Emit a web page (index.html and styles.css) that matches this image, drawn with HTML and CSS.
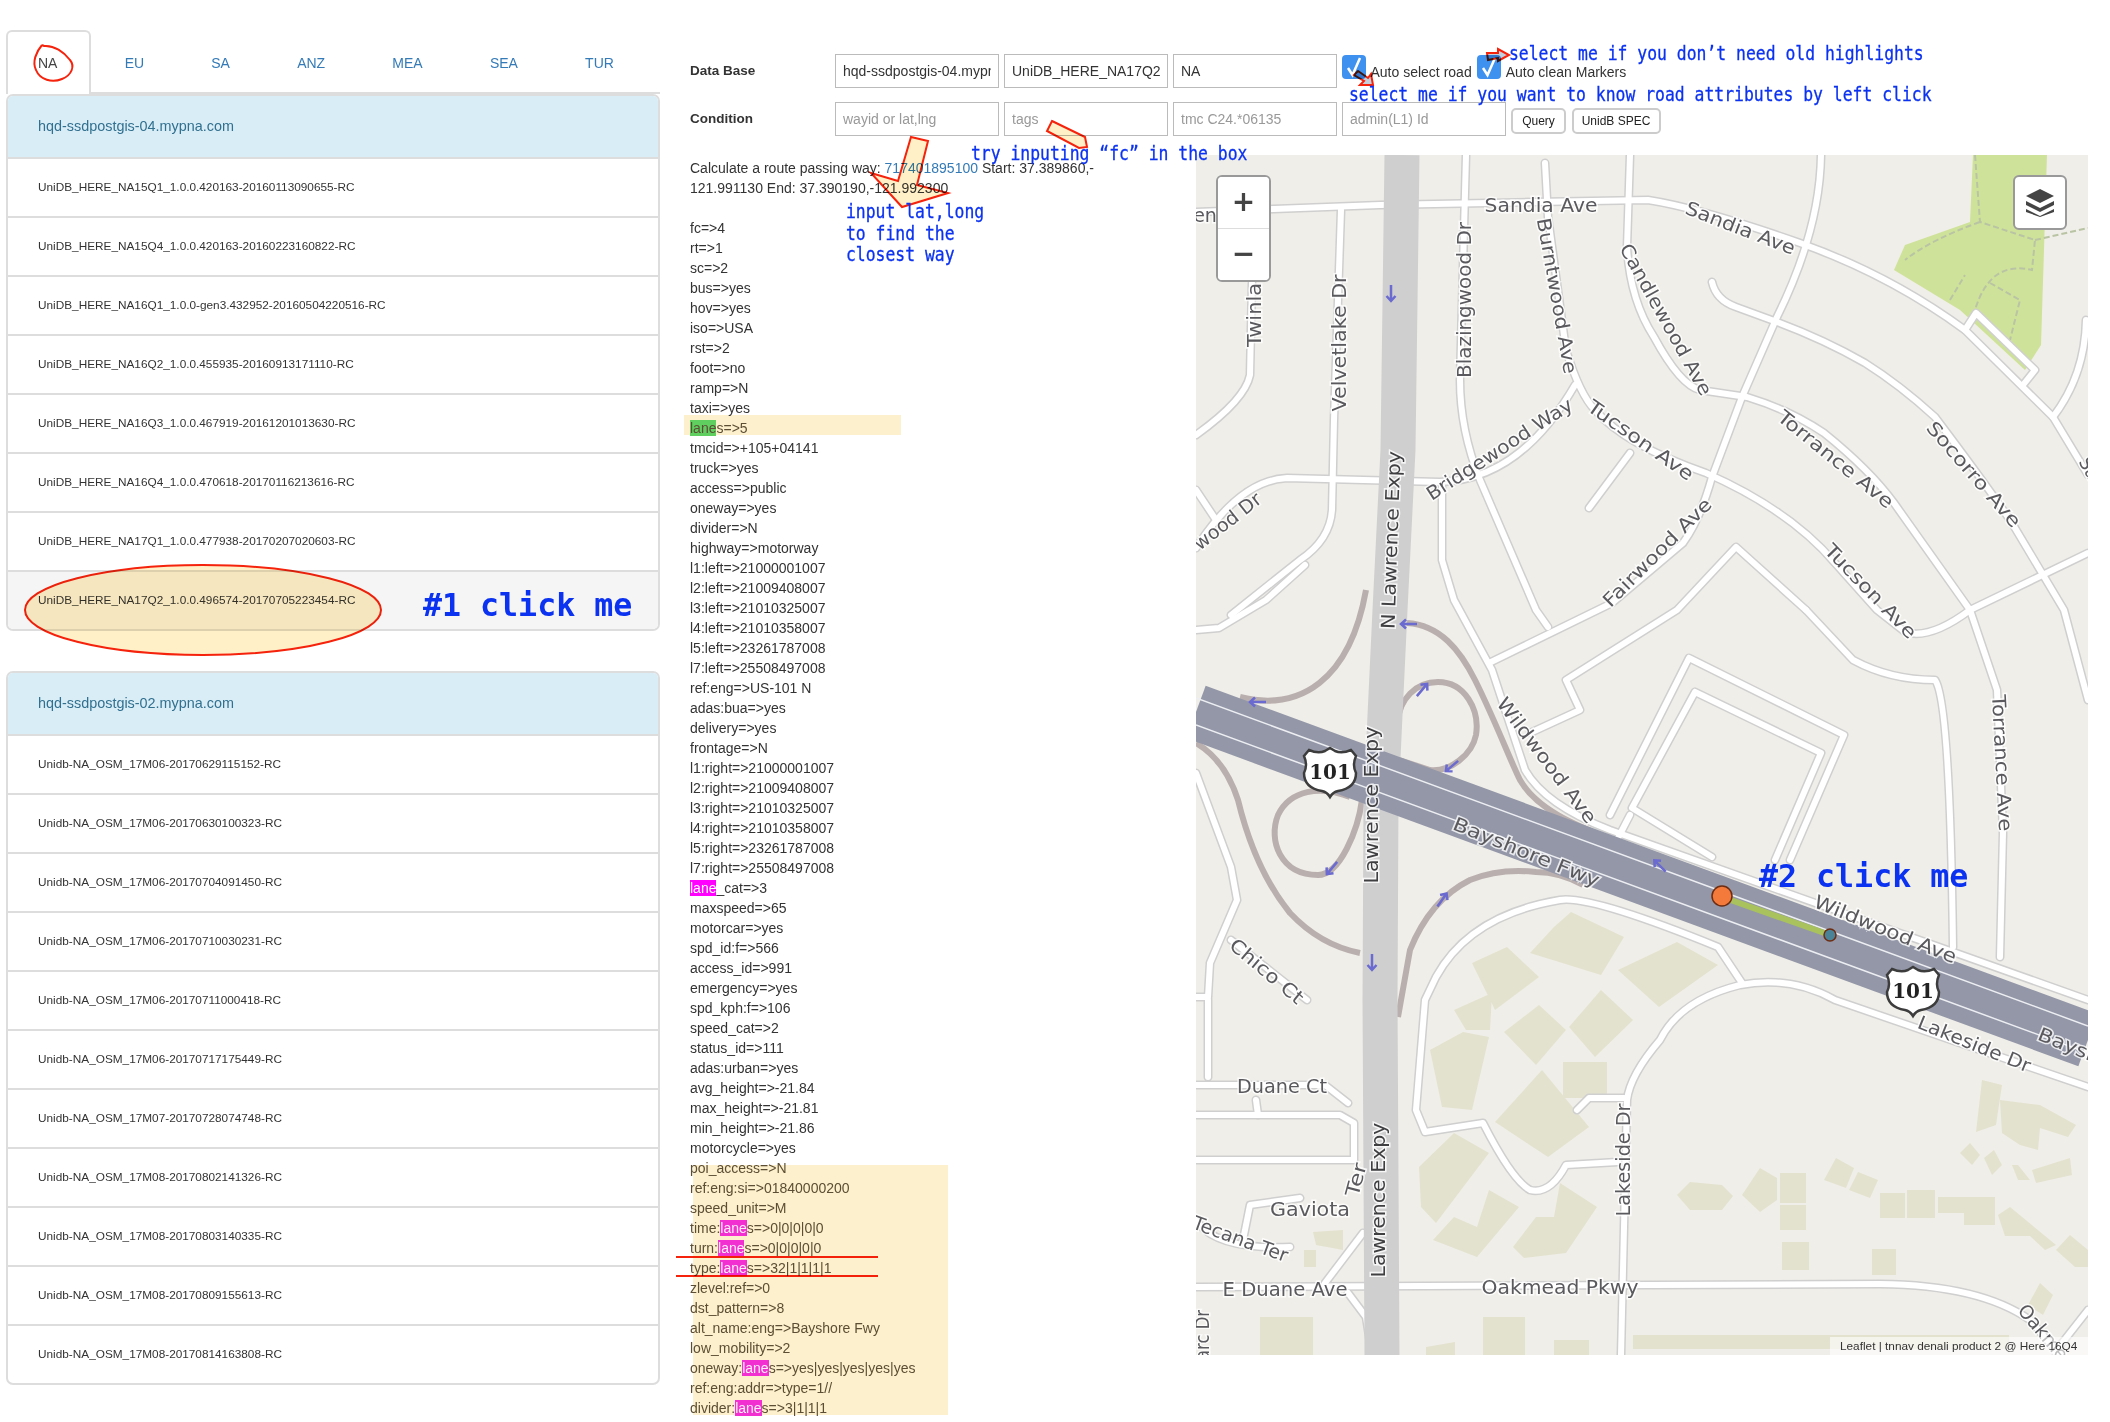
FILE: index.html
```html
<!DOCTYPE html>
<html lang="en">
<head>
    <meta charset="UTF-8">
    <meta name="viewport" content="width=device-width, initial-scale=1.0">
    <title>UniDB Map Viewer</title>
    <link rel="stylesheet" href="styles.css">
</head>
<body>
<div class="page">
    <div class="side">
        <ul class="tabs">
            <li class="tab active">NA</li>
            <li class="tab">EU</li>
            <li class="tab">SA</li>
            <li class="tab">ANZ</li>
            <li class="tab">MEA</li>
            <li class="tab">SEA</li>
            <li class="tab">TUR</li>
        </ul>
        <div class="panel">
            <div class="panel-head">hqd-ssdpostgis-04.mypna.com</div>
            <div class="row">UniDB_HERE_NA15Q1_1.0.0.420163-20160113090655-RC</div>
            <div class="row">UniDB_HERE_NA15Q4_1.0.0.420163-20160223160822-RC</div>
            <div class="row">UniDB_HERE_NA16Q1_1.0.0-gen3.432952-20160504220516-RC</div>
            <div class="row">UniDB_HERE_NA16Q2_1.0.0.455935-20160913171110-RC</div>
            <div class="row">UniDB_HERE_NA16Q3_1.0.0.467919-20161201013630-RC</div>
            <div class="row">UniDB_HERE_NA16Q4_1.0.0.470618-20170116213616-RC</div>
            <div class="row">UniDB_HERE_NA17Q1_1.0.0.477938-20170207020603-RC</div>
            <div class="row selected">UniDB_HERE_NA17Q2_1.0.0.496574-20170705223454-RC</div>
        </div>
        <div class="panel">
            <div class="panel-head">hqd-ssdpostgis-02.mypna.com</div>
            <div class="row">Unidb-NA_OSM_17M06-20170629115152-RC</div>
            <div class="row">Unidb-NA_OSM_17M06-20170630100323-RC</div>
            <div class="row">Unidb-NA_OSM_17M06-20170704091450-RC</div>
            <div class="row">Unidb-NA_OSM_17M06-20170710030231-RC</div>
            <div class="row">Unidb-NA_OSM_17M06-20170711000418-RC</div>
            <div class="row">Unidb-NA_OSM_17M06-20170717175449-RC</div>
            <div class="row">Unidb-NA_OSM_17M07-20170728074748-RC</div>
            <div class="row">Unidb-NA_OSM_17M08-20170802141326-RC</div>
            <div class="row">Unidb-NA_OSM_17M08-20170803140335-RC</div>
            <div class="row">Unidb-NA_OSM_17M08-20170809155613-RC</div>
            <div class="row">Unidb-NA_OSM_17M08-20170814163808-RC</div>
        </div>
    </div>

    <div class="main">
        <form class="query">
            <div class="query-row">
                <label class="query-label">Data Base</label>
                <input class="field" type="text" value="hqd-ssdpostgis-04.mypna.com">
                <input class="field" type="text" value="UniDB_HERE_NA17Q2_1.0.0.496574">
                <input class="field" type="text" value="NA">
                <span class="check"><svg viewBox="0 0 24 24"><path d="M6 13 L10.5 20 L18 3" /></svg></span>
                <span class="check-text first">Auto select road</span>
                <span class="check"><svg viewBox="0 0 24 24"><path d="M6 13 L10.5 20 L18 3" /></svg></span>
                <span class="check-text">Auto clean Markers</span>
            </div>
            <div class="query-row">
                <label class="query-label">Condition</label>
                <input class="field" type="text" placeholder="wayid or lat,lng">
                <input class="field" type="text" placeholder="tags">
                <input class="field" type="text" placeholder="tmc C24.*06135">
                <input class="field" type="text" placeholder="admin(L1) Id">
                <button class="btn query-btn" type="button">Query</button>
                <button class="btn spec-btn" type="button">UnidB SPEC</button>
            </div>
        </form>

        <div class="content">
            <div class="results">
                <div class="mark-band band-one"></div>
                <div class="mark-band band-two"></div>
                <p class="route">Calculate a route passing way: <a class="way-link">717401895100</a> Start: 37.389860,-<br>121.991130 End: 37.390190,-121.992300</p>
                <div>fc=&gt;4</div>
                <div>rt=&gt;1</div>
                <div>sc=&gt;2</div>
                <div>bus=&gt;yes</div>
                <div>hov=&gt;yes</div>
                <div>iso=&gt;USA</div>
                <div>rst=&gt;2</div>
                <div>foot=&gt;no</div>
                <div>ramp=&gt;N</div>
                <div>taxi=&gt;yes</div>
                <div class="dim"><span class="hit-green">lane</span>s=&gt;5</div>
                <div>tmcid=&gt;+105+04141</div>
                <div>truck=&gt;yes</div>
                <div>access=&gt;public</div>
                <div>oneway=&gt;yes</div>
                <div>divider=&gt;N</div>
                <div>highway=&gt;motorway</div>
                <div>l1:left=&gt;21000001007</div>
                <div>l2:left=&gt;21009408007</div>
                <div>l3:left=&gt;21010325007</div>
                <div>l4:left=&gt;21010358007</div>
                <div>l5:left=&gt;23261787008</div>
                <div>l7:left=&gt;25508497008</div>
                <div>ref:eng=&gt;US-101 N</div>
                <div>adas:bua=&gt;yes</div>
                <div>delivery=&gt;yes</div>
                <div>frontage=&gt;N</div>
                <div>l1:right=&gt;21000001007</div>
                <div>l2:right=&gt;21009408007</div>
                <div>l3:right=&gt;21010325007</div>
                <div>l4:right=&gt;21010358007</div>
                <div>l5:right=&gt;23261787008</div>
                <div>l7:right=&gt;25508497008</div>
                <div><span class="hit-pink">lane</span>_cat=&gt;3</div>
                <div>maxspeed=&gt;65</div>
                <div>motorcar=&gt;yes</div>
                <div>spd_id:f=&gt;566</div>
                <div>access_id=&gt;991</div>
                <div>emergency=&gt;yes</div>
                <div>spd_kph:f=&gt;106</div>
                <div>speed_cat=&gt;2</div>
                <div>status_id=&gt;111</div>
                <div>adas:urban=&gt;yes</div>
                <div>avg_height=&gt;-21.84</div>
                <div>max_height=&gt;-21.81</div>
                <div>min_height=&gt;-21.86</div>
                <div>motorcycle=&gt;yes</div>
                <div class="dim">poi_access=&gt;N</div>
                <div class="dim">ref:eng:si=&gt;01840000200</div>
                <div class="dim">speed_unit=&gt;M</div>
                <div class="dim">time:<span class="hit-rose">lane</span>s=&gt;0|0|0|0|0</div>
                <div class="dim">turn:<span class="hit-rose">lane</span>s=&gt;0|0|0|0|0</div>
                <div class="dim">type:<span class="hit-rose">lane</span>s=&gt;32|1|1|1|1</div>
                <div class="dim">zlevel:ref=&gt;0</div>
                <div class="dim">dst_pattern=&gt;8</div>
                <div class="dim">alt_name:eng=&gt;Bayshore Fwy</div>
                <div class="dim">low_mobility=&gt;2</div>
                <div class="dim">oneway:<span class="hit-rose">lane</span>s=&gt;yes|yes|yes|yes|yes</div>
                <div class="dim">ref:eng:addr=&gt;type=1//</div>
                <div class="dim">divider:<span class="hit-rose">lane</span>s=&gt;3|1|1|1</div>
                <div>divider:level=&gt;N</div>
            </div>

            <div class="map">
                <svg class="map-art" viewBox="1196 155 892 1200">
                    <defs>
                        <g id="minor-roads">
                            <path d="M1196 212 L1380 205 L1648 200 Q1700 208 1800 243 Q1890 275 1965 330 L2053 417 L2088 475"/>
                            <path d="M1466 155 L1460 380 Q1460 430 1480 480 L1536 610 L1548 627"/>
                            <path d="M1545 163 L1548 217 L1566 350 Q1580 395 1595 410 Q1625 445 1706 473 Q1790 510 1835 563 L1877 610 L1905 632 Q1930 640 1970 610 L2088 553"/>
                            <path d="M1630 155 L1627 247 Q1630 300 1654 337 Q1680 385 1700 390 L1747 397 Q1790 410 1824 433 Q1870 470 1894 503 L1970 610 L1997 690 L2003 833 L2000 957"/>
                            <path d="M1712 282 Q1716 300 1736 307 L1777 322 Q1825 340 1865 363 Q1900 385 1935 417 Q1990 490 2012 523 L2064 610 L2088 700"/>
                            <path d="M1821 155 Q1820 230 1777 317 L1742 397 L1712 477 Q1700 520 1683 543 L1612 603 L1489 663"/>
                            <path d="M1806 610 L1736 547 L1677 610 L1566 680 L1580 710 L1530 733"/>
                            <path d="M1806 610 L1853 660 Q1890 680 1935 680 Q1950 700 1953 947"/>
                            <path d="M1252 283 L1250 375 Q1245 400 1196 435"/>
                            <path d="M1341 210 L1334 420 L1332 510 Q1330 540 1300 560 L1231 615"/>
                            <path d="M1196 548 Q1240 480 1287 478 L1440 482 Q1520 480 1575 385"/>
                            <path d="M1196 490 L1216 520"/>
                            <path d="M1442 485 L1442 560 L1454 600 L1492 670 L1525 770 Q1545 805 1610 830 L2088 1000"/>
                            <path d="M1630 453 L1589 508"/>
                            <path d="M1965 330 L1976 313 L2035 370 L2023 385"/>
                            <path d="M2053 417 Q2085 375 2086 320"/>
                            <path d="M1689 658 L1844 735 L1790 860 M1689 658 L1610 815"/>
                            <path d="M1695 692 L1821 753 L1775 860 M1695 692 L1632 808 L1712 857"/>
                            <path d="M1630 815 L1618 838"/>
                            <path d="M1618 1162 L1566 1165 Q1550 1195 1530 1190 Q1512 1180 1483 1123 L1425 1132 L1416 1110 L1425 1000 L1436 977 Q1470 915 1560 900 Q1590 895 1718 947 L1742 983"/>
                            <path d="M2088 1087 L1835 1000 Q1790 975 1740 985 Q1680 1000 1660 1040 Q1630 1075 1627 1100 L1621 1355"/>
                            <path d="M1577 1110 L1589 1098 L1624 1098"/>
                            <path d="M1196 1287 L1880 1284 Q1980 1285 2030 1320 L2060 1355"/>
                            <path d="M2088 1310 L2055 1352"/>
                            <path d="M1196 1085 L1325 1085 L1348 1103"/>
                            <path d="M1196 1115 L1340 1115 L1354 1123 L1354 1160 L1196 1160"/>
                            <path d="M1256 1100 L1258 1115"/>
                            <path d="M1208 1000 L1208 1077"/>
                            <path d="M1243 1240 L1250 1205 L1300 1198"/>
                            <path d="M1196 1220 Q1215 1250 1290 1247"/>
                            <path d="M1363 1233 L1325 1283"/>
                            <path d="M1348 1293 L1366 1317 L1372 1355"/>
                            <path d="M1196 773 L1231 867 L1237 900 L1210 963 L1208 997 L1196 997"/>
                            <path d="M1231 940 L1307 1000"/>
                            <path d="M1196 630 L1219 628 L1266 600 L1305 565"/>
                        </g>
                        <g id="ramp-roads">
                            <path d="M1240 697 C1300 712 1350 680 1366 590"/>
                            <path d="M1407 623 C1440 625 1460 650 1475 680 C1495 720 1510 760 1520 780 C1540 815 1590 830 1636 850"/>
                            <path d="M1398 720 C1400 700 1415 682 1438 682 C1465 682 1480 710 1476 735 C1472 755 1450 772 1430 770 L1390 757"/>
                            <path d="M1350 797 C1320 785 1290 790 1278 815 C1268 840 1280 875 1318 875 C1340 875 1358 830 1362 800"/>
                            <path d="M1196 743 Q1225 760 1238 800 Q1255 870 1290 913 Q1320 945 1360 953"/>
                            <path d="M1583 885 Q1560 872 1536 872 Q1500 868 1470 880 Q1430 900 1410 950 L1398 1017"/>
                        </g>
                        <path id="way-arrow" d="M0 8 V-8 M-4.5 -3 L0 -8 L4.5 -3"/>
                        <g id="shield">
                            <path class="shield-body" d="M-21 -23 Q-12 -19 -5 -22 L0 -25 L5 -22 Q12 -19 21 -23 L26 -17 Q22 -8 26 0 Q26 15 8 18 Q3 19 0 24 Q-3 19 -8 18 Q-26 15 -26 0 Q-22 -8 -26 -17 Z"/>
                            <text class="shield-text" x="0" y="6" text-anchor="middle">101</text>
                        </g>
                    </defs>

                    <polygon class="park" points="1973,155 2047,155 2041,345 2025,370 1960,310 1894,270 1905,245 1970,222"/>
                    <path class="park-path" d="M1975 155 L1980 222 L2035 240 L2032 270 Q1990 260 1975 310 M1980 222 Q1930 240 1905 260 M2035 240 L2088 228 M1950 300 L1965 275 M1990 283 L2020 300 L2010 340"/>

                    <g class="building">
                        <polygon points="1554,927 1571,912 1624,937 1601,975 1530,953"/>
                        <polygon points="1472,963 1507,947 1539,977 1495,1010"/>
                        <polygon points="1618,970 1677,942 1718,965 1659,1007"/>
                        <polygon points="1454,1010 1492,993 1490,1030 1466,1030"/>
                        <polygon points="1504,1032 1539,1005 1566,1030 1536,1065"/>
                        <polygon points="1569,1027 1601,990 1633,1020 1595,1057"/>
                        <polygon points="1463,1032 1489,1037 1472,1110 1442,1107 1430,1050"/>
                        <polygon points="1495,1122 1542,1070 1589,1127 1548,1157"/>
                        <polygon points="1419,1167 1454,1133 1489,1153 1436,1223 1421,1207"/>
                        <polygon points="1433,1240 1454,1217 1477,1227 1489,1190 1519,1207 1477,1257"/>
                        <polygon points="1513,1247 1536,1217 1554,1217 1560,1183 1597,1207 1566,1253 1524,1258"/>
                        <polygon points="1313,1232 1343,1230 1343,1250 1316,1245"/>
                        <polygon points="1304,1250 1316,1250 1316,1267 1304,1267"/>
                        <polygon points="1563,1062 1607,1062 1607,1098 1563,1098"/>
                        <polygon points="1677,1195 1690,1182 1722,1185 1733,1196 1722,1210 1690,1210"/>
                        <polygon points="1742,1195 1760,1168 1777,1178 1777,1200 1760,1212"/>
                        <polygon points="1780,1173 1806,1173 1806,1203 1780,1203"/>
                        <polygon points="1780,1205 1806,1205 1806,1230 1780,1230"/>
                        <polygon points="1782,1242 1809,1242 1809,1270 1782,1270"/>
                        <polygon points="1872,1249 1896,1249 1896,1275 1872,1275"/>
                        <polygon points="1824,1180 1836,1158 1854,1168 1846,1188"/>
                        <polygon points="1849,1190 1858,1172 1878,1180 1870,1198"/>
                        <polygon points="1880,1193 1905,1193 1905,1218 1880,1218"/>
                        <polygon points="1907,1190 1935,1190 1935,1218 1907,1218"/>
                        <polygon points="1938,1197 1965,1197 1965,1213 1938,1213"/>
                        <polygon points="1964,1197 1995,1197 1995,1225 1964,1225"/>
                        <polygon points="1998,1215 2010,1207 2056,1245 2045,1250 2030,1236 2005,1236"/>
                        <polygon points="2056,1250 2070,1235 2088,1250 2088,1267 2075,1267"/>
                        <polygon points="1982,1080 2002,1085 1996,1125 1976,1132"/>
                        <polygon points="2000,1100 2040,1105 2076,1125 2068,1137 2040,1128 2038,1150 2020,1145 2002,1133"/>
                        <polygon points="1960,1153 1970,1143 1980,1155 1972,1165"/>
                        <polygon points="1984,1158 1994,1150 2002,1165 1992,1175"/>
                        <polygon points="2018,1165 2030,1180 2018,1180 2012,1165"/>
                        <polygon points="2032,1170 2070,1158 2072,1175 2036,1183"/>
                        <polygon points="2028,1305 2040,1283 2053,1295 2043,1315"/>
                        <polygon points="1260,1317 1313,1317 1313,1355 1260,1355"/>
                        <polygon points="1483,1317 1525,1317 1525,1355 1483,1355"/>
                        <polygon points="1554,1340 1589,1340 1589,1355 1554,1355"/>
                        <polygon points="1426,1347 1455,1342 1455,1355 1426,1355"/>
                        <polygon points="1633,1335 2009,1335 2009,1349 1633,1349"/>
                    </g>

                    <use href="#minor-roads" class="road-case"/>
                    <use href="#minor-roads" class="road-fill"/>
                    <use href="#ramp-roads" class="ramp"/>

                    <path class="expressway" d="M1402 155 L1398 450 L1390 610 L1381 800 L1380 1000 L1382 1355"/>
                    <path class="freeway" d="M1196 712 L2088 1040"/>
                    <path class="freeway-line" d="M1196 698 L2088 1026 M1196 725 L2088 1053"/>
                    <path class="matched-way" d="M1722 897 L1830 935"/>
                    <circle class="node-start" cx="1722" cy="896" r="10"/>
                    <circle class="node-end" cx="1830" cy="935" r="6"/>

                    <g class="way-arrows">
                        <use href="#way-arrow" transform="translate(1391 293) rotate(180)"/>
                        <use href="#way-arrow" transform="translate(1258 702) rotate(-90)"/>
                        <use href="#way-arrow" transform="translate(1409 624) rotate(-90)"/>
                        <use href="#way-arrow" transform="translate(1422 690) rotate(40)"/>
                        <use href="#way-arrow" transform="translate(1452 766) rotate(-130)"/>
                        <use href="#way-arrow" transform="translate(1332 868) rotate(-140)"/>
                        <use href="#way-arrow" transform="translate(1442 900) rotate(35)"/>
                        <use href="#way-arrow" transform="translate(1372 962) rotate(180)"/>
                        <use href="#way-arrow" transform="translate(1660 866) rotate(-45)"/>
                    </g>

                    <g class="labels">
                        <text x="1205" y="216">en</text>
                        <text transform="translate(1541 206)" textLength="113" lengthAdjust="spacingAndGlyphs">Sandia Ave</text>
                        <text transform="translate(1740 229) rotate(21)" textLength="116" lengthAdjust="spacingAndGlyphs">Sandia Ave</text>
                        <text transform="translate(1556 296) rotate(80)" textLength="158" lengthAdjust="spacingAndGlyphs">Burntwood Ave</text>
                        <text transform="translate(1665 320) rotate(61)" textLength="170" lengthAdjust="spacingAndGlyphs">Candlewood Ave</text>
                        <text transform="translate(1465 300) rotate(-90)" textLength="156" lengthAdjust="spacingAndGlyphs">Blazingwood Dr</text>
                        <text transform="translate(1340 343) rotate(-90)" textLength="137" lengthAdjust="spacingAndGlyphs">Velvetlake Dr</text>
                        <text transform="translate(1255 315) rotate(-90)" textLength="64" lengthAdjust="spacingAndGlyphs">Twinla</text>
                        <text transform="translate(1500 450) rotate(-33)" textLength="170" lengthAdjust="spacingAndGlyphs">Bridgewood Way</text>
                        <text transform="translate(1228 522) rotate(-38)" textLength="80" lengthAdjust="spacingAndGlyphs">wood Dr</text>
                        <text transform="translate(1640 441) rotate(35)" textLength="125" lengthAdjust="spacingAndGlyphs">Tucson Ave</text>
                        <text transform="translate(1835 460) rotate(39)" textLength="143" lengthAdjust="spacingAndGlyphs">Torrance Ave</text>
                        <text transform="translate(1973 475) rotate(49)" textLength="133" lengthAdjust="spacingAndGlyphs">Socorro Ave</text>
                        <text transform="translate(2098 485) rotate(60)" textLength="60" lengthAdjust="spacingAndGlyphs">Sandia</text>
                        <text transform="translate(1870 592) rotate(46)" textLength="123" lengthAdjust="spacingAndGlyphs">Tucson Ave</text>
                        <text transform="translate(1658 553) rotate(-45)" textLength="145" lengthAdjust="spacingAndGlyphs">Fairwood Ave</text>
                        <text transform="translate(1546 761) rotate(53)" textLength="152" lengthAdjust="spacingAndGlyphs">Wildwood Ave</text>
                        <text transform="translate(1885 930) rotate(22)" textLength="152" lengthAdjust="spacingAndGlyphs">Wildwood Ave</text>
                        <text transform="translate(2001 763) rotate(87)" textLength="137" lengthAdjust="spacingAndGlyphs">Torrance Ave</text>
                        <text transform="translate(1526 853) rotate(22)" textLength="156" lengthAdjust="spacingAndGlyphs">Bayshore Fwy</text>
                        <text transform="translate(2085 1053) rotate(22)" textLength="100" lengthAdjust="spacingAndGlyphs">Bayshore</text>
                        <text transform="translate(1974 1045) rotate(22)" textLength="120" lengthAdjust="spacingAndGlyphs">Lakeside Dr</text>
                        <text transform="translate(1266 972) rotate(40)" textLength="90" lengthAdjust="spacingAndGlyphs">Chico Ct</text>
                        <text transform="translate(1282 1087)" textLength="90" lengthAdjust="spacingAndGlyphs">Duane Ct</text>
                        <text transform="translate(1624 1160) rotate(-90)" textLength="113" lengthAdjust="spacingAndGlyphs">Lakeside Dr</text>
                        <text transform="translate(1310 1210)" textLength="80" lengthAdjust="spacingAndGlyphs">Gaviota</text>
                        <text transform="translate(1357 1180) rotate(-75)" textLength="34" lengthAdjust="spacingAndGlyphs">Ter</text>
                        <text transform="translate(1240 1240) rotate(20)" textLength="100" lengthAdjust="spacingAndGlyphs">Tecana Ter</text>
                        <text transform="translate(1285 1290)" textLength="125" lengthAdjust="spacingAndGlyphs">E Duane Ave</text>
                        <text transform="translate(1560 1288)" textLength="157" lengthAdjust="spacingAndGlyphs">Oakmead Pkwy</text>
                        <text transform="translate(2050 1342) rotate(50)" textLength="90" lengthAdjust="spacingAndGlyphs">Oakmead</text>
                        <text transform="translate(1203 1340) rotate(-90)" textLength="60" lengthAdjust="spacingAndGlyphs">Varc Dr</text>
                        <text class="label-dark" transform="translate(1392 540) rotate(-88)" textLength="178" lengthAdjust="spacingAndGlyphs">N Lawrence Expy</text>
                        <text class="label-dark" transform="translate(1372 805) rotate(-90)" textLength="157" lengthAdjust="spacingAndGlyphs">Lawrence Expy</text>
                        <text class="label-dark" transform="translate(1379 1200) rotate(-90)" textLength="155" lengthAdjust="spacingAndGlyphs">Lawrence Expy</text>
                    </g>

                    <use href="#shield" transform="translate(1330 773)"/>
                    <use href="#shield" transform="translate(1913 992)"/>
                </svg>

                <div class="zoom-box">
                    <button class="zoom-btn" type="button">+</button>
                    <button class="zoom-btn" type="button">&minus;</button>
                </div>
                <div class="layer-box">
                    <svg viewBox="0 0 30 28" width="30" height="28">
                        <path d="M15 0 L29 7 L15 14 L1 7 Z"/>
                        <path d="M1 12 L15 19 L29 12 V16 L15 23 L1 16 Z"/>
                        <path d="M1 20 L15 27 L29 20 V23 L15 28 L1 23 Z"/>
                    </svg>
                </div>
                <div class="attribution">Leaflet | tnnav denali product 2 @ Here 16Q4</div>
            </div>
        </div>
    </div>

    <!-- hand drawn notes on top of the screenshot -->
    <svg class="notes" viewBox="0 0 2110 1422">
        <path class="note-line" d="M42 45 C36 52 32 62 36 70 C40 80 52 83 62 79 C72 75 75 66 70 60 C64 52 54 45 44 46 L42 45"/>
        <ellipse class="note-oval" cx="203" cy="610" rx="178" ry="45"/>
        <polygon class="note-arrow" points="911,137 928,141 917,185 948,193 902,207 871,173 898,181"/>
        <polygon class="note-arrow" points="1052,121 1085,137 1087,147 1079,148 1047,131"/>
        <polygon class="note-arrow thin" points="1354,75 1358,71 1368,78 1371,74 1373,85 1360,85 1364,81"/>
        <polygon class="note-arrow thin" points="1487,53 1498,53 1498,49 1509,55 1498,61 1498,58 1488,60"/>
        <path class="note-line" d="M676 1257 H878 M676 1276 H878"/>
    </svg>
    <span class="note note-highlights">select me if you don&rsquo;t need old highlights</span>
    <span class="note note-attrs">select me if you want to know road attributes by left click</span>
    <span class="note note-fc">try inputing &ldquo;fc&rdquo; in the box</span>
    <span class="note note-latlng">input lat,long<br>to find the<br>closest way</span>
    <span class="note note-big note-one">#1 click me</span>
    <span class="note note-big note-two">#2 click me</span>
</div>
</body>
</html>
```

FILE: styles.css
```css
* {
    box-sizing: border-box;
}
html, body {
    margin: 0;
    background: #fff;
}
body {
    font-family: "Liberation Sans", Arial, sans-serif;
    font-size: 14px;
    color: #333;
}
.page {
    position: relative;
    display: flex;
    width: 2110px;
    height: 1422px;
    overflow: hidden;
}

/* left column */
.side {
    flex: 0 0 690px;
    padding: 30px 0 0 6px;
}
.tabs {
    display: flex;
    gap: 3.2px;
    width: 654px;
    height: 64px;
    margin: 0;
    padding: 0;
    list-style: none;
    border-bottom: 2px solid #ddd;
}
.tab {
    height: 64px;
    padding: 21px 32px 0;
    line-height: 20px;
    color: #337ab7;
    border: 2px solid transparent;
    border-width: 2px 2px 0;
    margin: 0 -2px;
}
.tab.active {
    margin-left: 0;
    padding-left: 30px;
    color: #444;
    background: #fff;
    border-color: #ddd;
    border-radius: 6px 6px 0 0;
}
.panel {
    width: 654px;
    margin-bottom: 40px;
    overflow: hidden;
    border: 2px solid #ddd;
    border-radius: 7px;
}
.panel-head {
    height: 61px;
    padding-left: 30px;
    font-size: 14.4px;
    line-height: 61px;
    color: #31708f;
    background: #d9edf7;
}
.row {
    height: 59px;
    padding-left: 30px;
    font-size: 11.8px;
    line-height: 57px;
    border-top: 2px solid #ddd;
}
.row.selected {
    background: #f5f5f5;
}

/* query form */
.main {
    flex: 1;
    padding-top: 54px;
}
.query-row {
    display: flex;
    gap: 5.5px;
    height: 34px;
    margin-bottom: 14px;
}
.query-label {
    flex: 0 0 139.5px;
    font-size: 13.5px;
    font-weight: bold;
    line-height: 34px;
}
.field {
    flex: 0 0 163.5px;
    width: 163.5px;
    height: 34px;
    padding: 0 7px;
    font: 14px "Liberation Sans", Arial, sans-serif;
    color: #333;
    background: #fff;
    border: 1px solid #bbb;
}
.field::placeholder {
    color: #999;
}
.check {
    flex: 0 0 24px;
    height: 24px;
    margin-top: 1px;
    background: #3f91ef;
    border-radius: 4px;
}
.check svg {
    display: block;
    width: 24px;
    height: 24px;
    fill: none;
    stroke: #fff;
    stroke-width: 2.5px;
}
.check-text {
    margin-left: -1px;
    line-height: 36px;
}
.check-text.first {
    margin-right: 0;
}
.btn {
    height: 26px;
    margin-top: 6px;
    padding: 0;
    font: 12px "Liberation Sans", Arial, sans-serif;
    color: #222;
    background: #fff;
    border: 2px solid #ccc;
    border-radius: 5px;
}
.query-btn {
    width: 55px;
}
.spec-btn {
    width: 89px;
}

/* results + map */
.content {
    display: flex;
    padding-top: 5px;
}
.results {
    position: relative;
    flex: 0 0 506px;
    padding-top: 3px;
    line-height: 20px;
    z-index: 0;
}
.route {
    margin: 0 0 20px;
    width: 420px;
}
.way-link {
    color: #337ab7;
}
.mark-band {
    position: absolute;
    z-index: -1;
    background: #fdf0cc;
}
.band-one {
    left: -6px;
    top: 260px;
    width: 217px;
    height: 20px;
}
.band-two {
    left: 3px;
    top: 1010px;
    width: 255px;
    height: 250px;
}
.dim {
    color: #5c4e34;
}
.hit-green {
    background: #5fcf5f;
}
.hit-pink {
    color: #fff;
    background: #f0f;
}
.hit-rose {
    color: #fdeef5;
    background: #f22fd0;
}
.map {
    position: relative;
    flex: 0 0 892px;
    height: 1200px;
    overflow: hidden;
    background: #f0eee8;
}
.map-art {
    display: block;
    width: 892px;
    height: 1200px;
    filter: blur(0.7px);
}
.park {
    fill: #cfe29a;
}
.park-path {
    fill: none;
    stroke: #b9c4a4;
    stroke-width: 2;
    stroke-dasharray: 6 3;
}
.building polygon {
    fill: #e3e2cf;
}
#minor-roads path,
#ramp-roads path {
    fill: none;
}
.road-case {
    stroke: #cfcfcf;
    stroke-width: 9;
    stroke-linejoin: round;
    stroke-linecap: round;
}
.road-fill {
    stroke: #fff;
    stroke-width: 6;
    stroke-linejoin: round;
    stroke-linecap: round;
}
.ramp {
    stroke: #b9afaf;
    stroke-width: 6;
}
.expressway {
    fill: none;
    stroke: #cfcfd0;
    stroke-width: 35;
}
.freeway {
    fill: none;
    stroke: #9397a8;
    stroke-width: 56;
}
.freeway-line {
    fill: none;
    stroke: #eceef2;
    stroke-width: 1.5;
}
.matched-way {
    stroke: #a9c25e;
    stroke-width: 6;
}
.node-start {
    fill: #f47a3c;
    stroke: #6e2c10;
    stroke-width: 1.5;
}
.node-end {
    fill: #4a8298;
    stroke: #6e2c10;
    stroke-width: 1.5;
}
.way-arrows use {
    fill: none;
    stroke: #6a6ad0;
    stroke-width: 2.5;
}
.labels text {
    font-family: "DejaVu Sans", sans-serif;
    font-size: 19px;
    fill: #5a5a5e;
    stroke: #fff;
    stroke-width: 3px;
    stroke-opacity: 0.8;
    paint-order: stroke;
    text-anchor: middle;
    dominant-baseline: middle;
}
.labels .label-dark {
    fill: #3f3f42;
}
.shield-body {
    fill: #fff;
    stroke: #3c3c3c;
    stroke-width: 2.5;
}
.shield-text {
    font-family: "DejaVu Serif", serif;
    font-size: 20px;
    font-weight: bold;
    fill: #222;
}
.zoom-box {
    position: absolute;
    left: 20px;
    top: 20px;
    width: 55px;
    height: 107px;
    overflow: hidden;
    background: #fff;
    border: 2px solid #999;
    border-radius: 6px;
}
.zoom-btn {
    display: block;
    width: 100%;
    height: 51.5px;
    padding: 0;
    font: bold 28px "DejaVu Sans", sans-serif;
    line-height: 48px;
    color: #444;
    background: #fff;
    border: 0;
}
.zoom-btn:first-child {
    border-bottom: 1px solid #ddd;
}
.layer-box {
    position: absolute;
    left: 817px;
    top: 20px;
    display: flex;
    align-items: center;
    justify-content: center;
    width: 54px;
    height: 55px;
    background: #fff;
    border: 2px solid #999;
    border-radius: 6px;
}
.layer-box svg {
    fill: #444;
}
.attribution {
    position: absolute;
    right: 0;
    bottom: 0;
    width: 258px;
    padding-left: 10px;
    font-size: 11.8px;
    line-height: 18px;
    color: #333;
    background: rgba(255, 255, 255, 0.6);
}

/* annotations */
.notes {
    position: absolute;
    left: 0;
    top: 0;
    width: 2110px;
    height: 1422px;
    pointer-events: none;
    mix-blend-mode: multiply;
}
.note-line {
    fill: none;
    stroke: #f5220c;
    stroke-width: 2;
}
.note-oval {
    fill: #fff0c8;
    stroke: #f5220c;
    stroke-width: 2;
}
.note-arrow {
    fill: #fff0c8;
    stroke: #f5220c;
    stroke-width: 2;
}
.note-arrow.thin {
    fill: #c4cfdc;
}
.note {
    position: absolute;
    font-family: "DejaVu Sans Mono", monospace;
    font-size: 18.6px;
    line-height: 21.5px;
    color: #0b32f0;
    white-space: nowrap;
    transform: scaleX(0.882);
    transform-origin: left center;
    -webkit-text-stroke: 0.3px #0b32f0;
}
.note-highlights {
    left: 1509px;
    top: 43px;
}
.note-attrs {
    left: 1349px;
    top: 84px;
}
.note-fc {
    left: 971px;
    top: 143px;
}
.note-latlng {
    left: 846px;
    top: 201px;
}
.note-big {
    font-size: 31.6px;
    font-weight: bold;
    line-height: 36px;
    transform: none;
    -webkit-text-stroke: 0;
}
.note-one {
    left: 423px;
    top: 587px;
}
.note-two {
    left: 1759px;
    top: 858px;
}
```
